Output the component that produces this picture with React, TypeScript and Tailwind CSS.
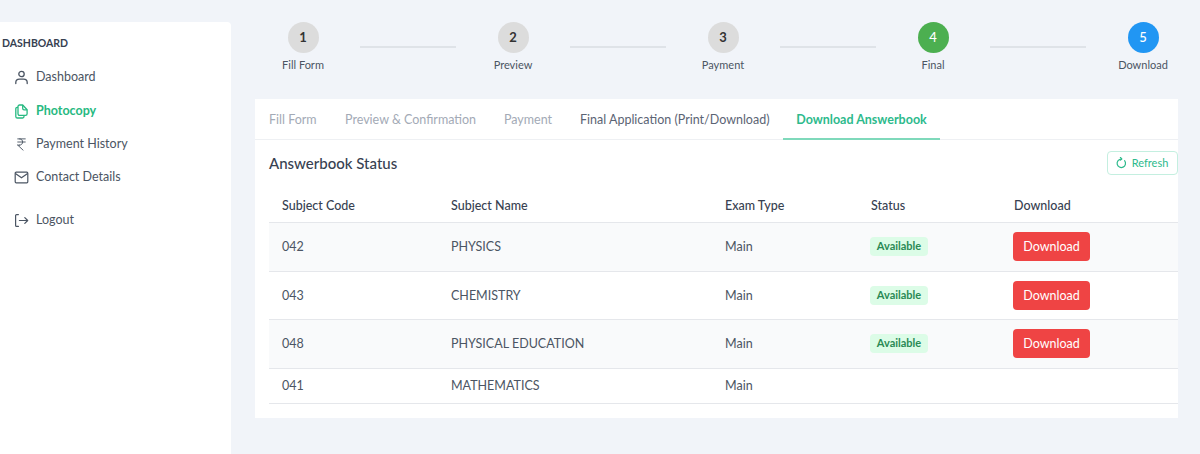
import React from 'react';
import { IndianRupee } from 'lucide-react';

const steps = [
  { num: 1, label: 'Fill Form', circle: 'bg-[#dcdcdc] text-[#333333] font-bold' },
  { num: 2, label: 'Preview', circle: 'bg-[#dcdcdc] text-[#333333] font-bold' },
  { num: 3, label: 'Payment', circle: 'bg-[#dcdcdc] text-[#333333] font-bold' },
  { num: 4, label: 'Final', circle: 'bg-[#4caf50] text-white font-medium' },
  { num: 5, label: 'Download', circle: 'bg-[#2196f3] text-white font-medium' },
];

const tabs = [
  { label: 'Fill Form', cls: 'text-[#a3aab6] w-[76px] pl-[14px]' },
  { label: 'Preview & Confirmation', cls: 'text-[#a3aab6] w-[159px] pl-[14px]' },
  { label: 'Payment', cls: 'text-[#a3aab6] w-[76px] pl-[14px]' },
  { label: 'Final Application (Print/Download)', cls: 'text-[#5b6474] w-[217px] pl-[14px]' },
];

const rows = [
  { code: '042', name: 'PHYSICS', available: true, h: 'h-[49px]', bg: 'bg-[#f9fafb]' },
  { code: '043', name: 'CHEMISTRY', available: true, h: 'h-[48px]', bg: 'bg-white' },
  { code: '048', name: 'PHYSICAL EDUCATION', available: true, h: 'h-[49px]', bg: 'bg-[#f9fafb]' },
  { code: '041', name: 'MATHEMATICS', available: false, h: 'h-[35px]', bg: 'bg-white' },
];

const UserIcon = () => (
  <svg className="h-[15px] w-[15px]" viewBox="0 0 15 15" fill="none" stroke="currentColor" strokeWidth="1.3" strokeLinecap="round">
    <circle cx="7.5" cy="4" r="2.7" />
    <path d="M1.8 13.6v-1c0-2.2 1.8-3.4 3.6-3.4h4.2c1.8 0 3.6 1.2 3.6 3.4v1" />
  </svg>
);

const CopyIcon = () => (
  <svg className="h-[15px] w-[15px]" viewBox="0 0 15 15" fill="none" stroke="currentColor" strokeWidth="1.3" strokeLinejoin="round">
    <path d="M4 3.4H3.2c-.8 0-1.4.6-1.4 1.4v7.6c0 1 .7 1.6 1.6 1.6h5.2c.8 0 1.4-.6 1.4-1.4v-.6" />
    <path d="M5.6 1h3.1l4.4 4.8v4c0 .9-.7 1.6-1.6 1.6H5.6c-.9 0-1.6-.7-1.6-1.6V2.6C4 1.7 4.7 1 5.6 1z" />
    <path d="M8.7 1v3.4c0 .8.6 1.4 1.4 1.4h3" />
  </svg>
);

const MailIcon = () => (
  <svg className="h-[15px] w-[15px]" viewBox="0 0 15 15" fill="none" stroke="currentColor" strokeWidth="1.2" strokeLinejoin="round">
    <rect x="1.2" y="2.2" width="12.6" height="10.6" rx="1" />
    <path d="M1.4 3.6l6.1 4.2 6.1-4.2" />
  </svg>
);

const LogoutIcon = () => (
  <svg className="h-[15px] w-[15px]" viewBox="0 0 15 15" fill="none" stroke="currentColor" strokeWidth="1.2" strokeLinecap="round" strokeLinejoin="round">
    <path d="M4.4 1.6H2.6c-.6 0-1 .4-1 1v9.8c0 .6.4 1 1 1h1.8" />
    <path d="M5.4 7.5h8.2M10.8 4.6l2.9 2.9-2.9 2.9" />
  </svg>
);

const RefreshIcon = () => (
  <svg className="h-[12px] w-[12px]" viewBox="0 0 12 12" fill="none" stroke="currentColor" strokeWidth="1.2" strokeLinecap="round" strokeLinejoin="round">
    <path d="M6.4 2.1A4.2 4.2 0 1 0 9.6 3.7" />
    <path d="M5.4.4l1.4 1.6-1.6 1.2" />
  </svg>
);

const NavItem = ({ icon, label, active, className }: { icon: React.ReactNode; label: string; active?: boolean; className?: string }) => (
  <div className={`flex h-[33.4px] items-center gap-[7px] pl-[14px] text-[12.5px] ${active ? 'font-bold text-[#27b981]' : 'text-[#4b5563]'} ${className ?? ''}`}>
    <span className="flex w-[15px] justify-center">{icon}</span>
    <span>{label}</span>
  </div>
);

export default function App() {
  return (
    <div className="flex h-[454px] w-[1200px] overflow-hidden bg-[#f1f4f9] font-['Lato',sans-serif]">
      {/* Sidebar */}
      <aside className="mt-[22px] w-[231px] rounded-tr-[4px] bg-white">
        <div className="pl-[2px] pt-[14px] text-[10.5px] font-bold leading-[14px] text-[#374151]">DASHBOARD</div>
        <nav className="mt-[11px]">
          <NavItem icon={<UserIcon />} label="Dashboard" />
          <NavItem icon={<CopyIcon />} label="Photocopy" active />
          <NavItem icon={<IndianRupee size={15} strokeWidth={1.5} />} label="Payment History" />
          <NavItem icon={<MailIcon />} label="Contact Details" />
          <NavItem icon={<LogoutIcon />} label="Logout" className="mt-[9px]" />
        </nav>
      </aside>

      <main className="flex-1">
        {/* Stepper */}
        <div className="ml-[15px] mt-[22px] flex items-start">
          {steps.map((s, i) => (
            <React.Fragment key={s.num}>
              <div className="flex w-[114px] flex-col items-center">
                <div className={`flex h-[31px] w-[31px] items-center justify-center rounded-full text-[13px] ${s.circle}`}>{s.num}</div>
                <div className="mt-[5px] text-[11px] leading-[14px] text-[#4b5563]">{s.label}</div>
              </div>
              {i < steps.length - 1 && <div className="mt-[24px] h-[2px] w-[96px] bg-[#dfe3e8]" />}
            </React.Fragment>
          ))}
        </div>

        {/* Card */}
        <div className="ml-[24px] mt-[27px] h-[319px] w-[923px] bg-white">
          <div className="flex h-[41px] border-b border-[#eef0f3] text-[12.5px]">
            {tabs.map((t) => (
              <div key={t.label} className={`flex items-center whitespace-nowrap pt-[3px] ${t.cls}`}>{t.label}</div>
            ))}
            <div className="-mb-[1px] flex h-[41px] w-[157px] items-center justify-center border-b-2 border-[#7fd9bb] pt-[3px] font-bold text-[#2dba8c]">
              Download Answerbook
            </div>
          </div>

          <div className="pl-[14px]">
            <div className="flex h-[48px] items-center justify-between pb-[2px]">
              <h2 className="text-[15px] font-medium text-[#374151]">Answerbook Status</h2>
              <button className="flex h-[24px] w-[71px] items-center justify-center gap-[5px] rounded-[4px] border border-[#c4efe0] pr-[2px] text-[11px] text-[#2dba8c]">
                <RefreshIcon />
                Refresh
              </button>
            </div>

            <table className="w-[909px] table-fixed border-collapse text-left text-[12.5px] text-[#4b5563]">
              <thead>
                <tr className="h-[34px] border-b border-[#e5e7eb]">
                  <th className="w-[182px] pl-[13px] pt-[3px] font-medium text-[#374151]">Subject Code</th>
                  <th className="w-[274px] pt-[3px] font-medium text-[#374151]">Subject Name</th>
                  <th className="w-[146px] pt-[3px] font-medium text-[#374151]">Exam Type</th>
                  <th className="w-[143px] pt-[3px] font-medium text-[#374151]">Status</th>
                  <th className="pt-[3px] font-medium text-[#374151]">Download</th>
                </tr>
              </thead>
              <tbody>
                {rows.map((r) => (
                  <tr key={r.code} className={`${r.h} ${r.bg} border-b border-[#e5e7eb]`}>
                    <td className="pl-[13px] pt-[2px]">{r.code}</td>
                    <td className="pt-[2px]">{r.name}</td>
                    <td className="pt-[2px]">Main</td>
                    <td>
                      {r.available && (
                        <span className="-ml-[1px] inline-flex h-[19px] w-[58px] items-center justify-center rounded-[4px] bg-[#dcfce7] text-[11px] font-bold text-[#2a8a55]">Available</span>
                      )}
                    </td>
                    <td>
                      {r.available && (
                        <button className="-ml-[1px] flex h-[29px] w-[77px] items-center justify-center rounded-[4px] bg-[#ef4444] pt-[2px] text-[12.5px] text-white">Download</button>
                      )}
                    </td>
                  </tr>
                ))}
              </tbody>
            </table>
          </div>
        </div>
      </main>
    </div>
  );
}
